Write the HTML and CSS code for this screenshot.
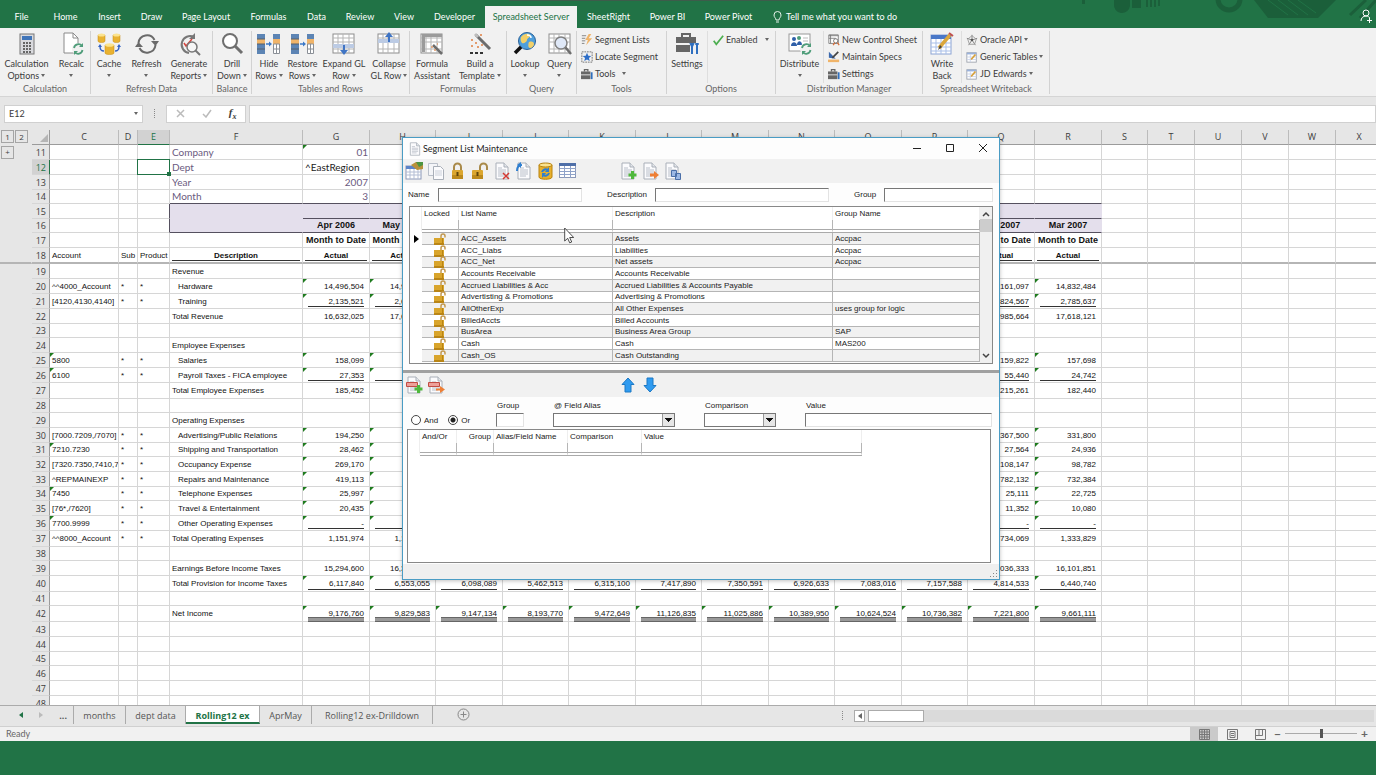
FILE: index.html
```
<!DOCTYPE html>
<html lang="en">
<head>
  <meta charset="UTF-8" />
  <meta name="viewport" content="width=device-width, initial-scale=1.0"/>
  <title>Rolling12 ex - Spreadsheet Server</title>
  <link rel="stylesheet" href="styles.css">
</head>
<body>
  <!-- shared icons -->
  <svg class="defs" aria-hidden="true">
    <symbol id="i-page" viewBox="0 0 18 18">
      <path d="M3 1h8l4 4v12H3z" fill="#fbfbfd" stroke="#a9afb8"/>
      <path d="M11 1v4h4" fill="#e3e6ea" stroke="#a9afb8"/>
      <path d="M5 6h4M5 8h8M5 10h8M5 12h8M5 14h6" stroke="#b9bfc9"/>
    </symbol>
    <symbol id="i-unlock" viewBox="0 0 12 12">
      <path d="M7 6V3a2 2 0 0 1 4 0v1.500" fill="none" stroke="#c39a52" stroke-width="1.500"/>
      <rect x="0" y="5" width="10" height="7" fill="#d9a52c"/>
      <path d="M0 10h10v2H0z" fill="#b98516"/>
      <path d="M8.500 5v7" stroke="#b98516"/>
    </symbol>
    <symbol id="i-case" viewBox="0 0 14 14">
      <path d="M4 4V2h4v2" fill="none" stroke="#666" stroke-width="1.500"/>
      <rect x="0" y="4" width="11" height="9" fill="#666"/>
      <path d="M0 8h11" stroke="#f1f1f1"/>
      <path d="M12.500 5v8" stroke="#2f6fbf" stroke-width="2"/>
    </symbol>
    <symbol id="i-sheetpen" viewBox="0 0 14 14">
      <rect x="1" y="2" width="11" height="11" fill="#fff" stroke="#9aa0aa"/>
      <path d="M1 2h11v2H1z" fill="#9ab2dc"/>
      <path d="M1 7h11M1 10h11M5 4v9" stroke="#c8d3ea"/>
      <path d="M11 4L6 10" stroke="#d8a038" stroke-width="2"/>
    </symbol>
    <symbol id="i-hide" viewBox="0 0 24 20">
      <path d="M0 0h8v20H0z" fill="#5c84b4"/>
      <path d="M0 5h8v5H0z" fill="#f0b469"/>
      <path d="M0 5h8M0 10h8M0 15h8" stroke="#54606e"/>
      <path d="M9 10h4" stroke="#3a78c8" stroke-width="1.500"/><path d="M12 7.500l3 2.500-3 2.500z" fill="#3a78c8"/>
      <path d="M16 0h7v5h-7z" fill="#5c84b4"/><path d="M16 5h7v5h-7z" fill="#f0b469"/>
      <path d="M16.500 10h6v9.500h-6zM16 15h7M19.500 10v10" fill="#fff" stroke="#8a8f96"/>
    </symbol>
    <symbol id="i-grid" viewBox="0 0 24 22">
      <rect x="1" y="1" width="21" height="19" fill="#fff" stroke="#8d8d8d"/>
      <path d="M1 5h21M1 9h21M1 16h21M6 1v19M11 1v19M17 1v19" stroke="#b5b5b5"/>
    </symbol>
  </svg>

  <header class="tabs-bar">
    <svg class="pattern" width="310" height="20" viewBox="0 0 310 20" aria-hidden="true">
      <g fill="#1b5f3a">
        <path d="M16 0h3v4h-3z"/>
        <path d="M48 0h16v6a8 8 0 0 1-16-2z"/>
        <path d="M66 0h9v8h-9z"/>
        <path d="M80 0h2v7h-2zM84 0h2v7h-2zM88 0h2v7h-2zM92 0h2v6h-2z"/>
        <path d="M188 0l14 18h50l18-18z"/>
      </g>
      <circle cx="163" cy="-1" r="11" fill="none" stroke="#1b5f3a" stroke-width="5"/>
      <path d="M202 0l20 15M212 0l20 15M222 0l20 15M232 0l18 13" stroke="#217346"/>
      <path d="M284 15l16-15M294 18l16-18" stroke="#1b5f3a" stroke-width="3"/>
    </svg>
    <nav class="tabs">
      <a href="#">File</a>
      <a href="#">Home</a>
      <a href="#">Insert</a>
      <a href="#">Draw</a>
      <a href="#">Page Layout</a>
      <a href="#">Formulas</a>
      <a href="#">Data</a>
      <a href="#">Review</a>
      <a href="#">View</a>
      <a href="#">Developer</a>
      <a href="#" class="active">Spreadsheet Server</a>
      <a href="#">SheetRight</a>
      <a href="#">Power BI</a>
      <a href="#">Power Pivot</a>
      <a href="#" class="tell">
        <svg width="9" height="13" viewBox="0 0 9 13"><path d="M3 9C3 7 1 6.500 1 4a3.500 3.500 0 0 1 7 0c0 2.500-2 3-2 5zM3 11h3" fill="none" stroke="#e6f2ea"/></svg>
        Tell me what you want to do
      </a>
    </nav>
    <button class="share" aria-label="Share">
      <svg width="13" height="14" viewBox="0 0 13 14"><circle cx="6" cy="4" r="3" fill="none" stroke="#fff"/><path d="M1 12c0-3 2-5 5-5 2 0 3 1 4 2M7 11.500h5M9.500 9v5" fill="none" stroke="#fff"/></svg>
    </button>
  </header>

  <section class="ribbon">
    <div class="group g-calc">
      <div class="tools">
        <button class="big">
          <svg viewBox="0 0 24 24"><rect x="5" y="2" width="14" height="20" fill="#d9dade" stroke="#777"/><path d="M7 4h10v4H7z" fill="#3f74b8"/><path d="M8 11h2M11 11h2M14 11h2M8 14h2M11 14h2M14 14h2M8 17h2M11 17h2M14 17h2M8 20h2M11 20h2M14 20h2" stroke="#666" stroke-width="2"/></svg>
          <span>Calculation<br>Options <i class="caret"></i></span>
        </button>
        <button class="big">
          <svg viewBox="0 0 24 24"><path d="M4 1h9l5 5v15H4z" fill="#fff" stroke="#8a8a8a"/><path d="M13 1v5h5" fill="none" stroke="#8a8a8a"/><circle cx="18" cy="17" r="6" fill="#f1f1f1"/><path d="M14 16a4.500 4.500 0 0 1 8-2M22.500 18a4.500 4.500 0 0 1-8 2" fill="none" stroke="#4f9d7a" stroke-width="1.800"/><path d="M23 11v4h-4zM14 23v-4h4z" fill="#4f9d7a"/></svg>
          <span>Recalc<br><i class="caret"></i></span>
        </button>
      </div>
      <div class="caption">Calculation</div>
    </div>

    <div class="group g-refresh">
      <div class="tools">
        <button class="big">
          <svg viewBox="0 0 24 24"><g fill="#e9b231" stroke="#c58a12" stroke-width=".5"><path d="M1 3v6c0 2 7 2 7 0V3z"/><path d="M16 3v6c0 2 7 2 7 0V3z"/><path d="M8 13v8c0 2 9 2 9 0v-8z"/></g><g fill="#fbe38e"><ellipse cx="4.500" cy="3" rx="3.500" ry="1.500"/><ellipse cx="19.500" cy="3" rx="3.500" ry="1.500"/><ellipse cx="12.500" cy="13" rx="4.500" ry="1.800"/></g><path d="M3 14c0 4 1 5 4 5M22 14c0 4-1 5-4 5" fill="none" stroke="#3564c4" stroke-width="1.500"/><path d="M1 15l2-3 2 3zM20 15l2-3 2 3z" fill="#3564c4"/></svg>
          <span>Cache<br><i class="caret"></i></span>
        </button>
        <button class="big">
          <svg viewBox="0 0 24 24"><path d="M3.500 11a8.500 8.500 0 0 1 16-3M20.500 13a8.500 8.500 0 0 1-16 3" fill="none" stroke="#6a6a6a" stroke-width="2"/><path d="M16 9h8l-3.500 5zM8 15H0l3.500-5z" fill="#6a6a6a"/></svg>
          <span>Refresh<br><i class="caret"></i></span>
        </button>
        <button class="big">
          <svg viewBox="0 0 24 24"><path d="M12 21A8.500 8.500 0 1 1 17 5" fill="none" stroke="#777" stroke-width="2"/><path d="M18 1v6h-6z" fill="#777"/><path d="M7 11l2 3 6-7" fill="none" stroke="#d8433b" stroke-width="1.500"/><circle cx="15" cy="15" r="5" fill="#f6f6f6" stroke="#777" stroke-width="1.500"/><path d="M18.500 18.500L23 23" stroke="#777" stroke-width="2"/></svg>
          <span>Generate<br>Reports <i class="caret"></i></span>
        </button>
      </div>
      <div class="caption">Refresh Data</div>
    </div>

    <div class="group g-balance">
      <div class="tools">
        <button class="big">
          <svg viewBox="0 0 24 24"><circle cx="10" cy="9" r="7" fill="#fff" stroke="#6f6f6f" stroke-width="2"/><path d="M15 14l7 7" stroke="#6f6f6f" stroke-width="3"/></svg>
          <span>Drill<br>Down <i class="caret"></i></span>
        </button>
      </div>
      <div class="caption">Balance</div>
    </div>

    <div class="group g-rows">
      <div class="tools">
        <button class="big"><svg viewBox="0 0 24 22"><use href="#i-hide" width="24" height="20" y="1"/></svg><span>Hide<br>Rows <i class="caret"></i></span></button>
        <button class="big"><svg viewBox="0 0 24 22"><use href="#i-hide" width="24" height="20" y="1"/></svg><span>Restore<br>Rows <i class="caret"></i></span></button>
        <button class="big">
          <svg viewBox="0 0 24 24"><use href="#i-grid" width="24" height="22" y="1"/><path d="M1 12h21v4H1z" fill="#bccbe4"/><path d="M12 13v6" stroke="#3f74c4" stroke-width="2"/><path d="M8 18h8l-4 5z" fill="#3f74c4"/></svg>
          <span>Expand GL<br>Row <i class="caret"></i></span>
        </button>
        <button class="big">
          <svg viewBox="0 0 24 24"><use href="#i-grid" width="24" height="22" y="1"/><path d="M1 7h21v4H1z" fill="#bccbe4"/><path d="M12 3v7" stroke="#3f74c4" stroke-width="2"/><path d="M8 5h8l-4-5z" fill="#3f74c4"/></svg>
          <span>Collapse<br>GL Row <i class="caret"></i></span>
        </button>
      </div>
      <div class="caption">Tables and Rows</div>
    </div>

    <div class="group g-formulas">
      <div class="tools">
        <button class="big">
          <svg viewBox="0 0 24 24"><use href="#i-grid" width="24" height="22" y="1"/><path d="M2 2h20v3H2zM2 2h3v18H2z" fill="#9b9b9b"/><path d="M13 13l9 9" stroke="#6d6d6d" stroke-width="2.500"/><path d="M11 15h2M14 18h2M17 12h1" stroke="#e09a6a" stroke-width="1.500"/></svg>
          <span>Formula<br>Assistant</span>
        </button>
        <button class="big">
          <svg viewBox="0 0 24 24"><path d="M8 3l14 14" stroke="#6d6d6d" stroke-width="3"/><path d="M7 2l3 3" stroke="#bdbdbd" stroke-width="3"/><path d="M3 8h2M7 11h2M3 14h2M9 15h2M13 13h2M12 3h2" stroke="#e39b6d" stroke-width="2"/><path d="M2 21h3M7 21h3M12 21h3" stroke="#333" stroke-width="2"/></svg>
          <span>Build a<br>Template <i class="caret"></i></span>
        </button>
      </div>
      <div class="caption">Formulas</div>
    </div>

    <div class="group g-query">
      <div class="tools">
        <button class="big">
          <svg viewBox="0 0 24 24"><circle cx="14" cy="9" r="8.500" fill="#4f9fdc" stroke="#2a6097"/><path d="M8 5c3-4 8-4 9-2s-3 3-3 5-4 4-5 3-2-4-1-6zM16 10c3-1 5 0 5 2s-2 4-4 4-2-4-1-6z" fill="#f2d069"/><path d="M14 3c2 0 4 1 4 3" stroke="#fff" stroke-width="1.500" fill="none"/><path d="M8 15l-6 6" stroke="#111" stroke-width="3.500"/></svg>
          <span>Lookup<br><i class="caret"></i></span>
        </button>
        <button class="big">
          <svg viewBox="0 0 24 24"><use href="#i-grid" width="24" height="22" y="1"/><circle cx="13" cy="11" r="6" fill="#dfe8f7" stroke="#808080" stroke-width="1.500"/><path d="M17.500 15.500L23 22" stroke="#6d6d6d" stroke-width="2.500"/></svg>
          <span>Query<br><i class="caret"></i></span>
        </button>
      </div>
      <div class="caption">Query</div>
    </div>

    <div class="group g-tools">
      <div class="tools">
        <div class="stack">
          <button class="small">
            <svg viewBox="0 0 14 14"><path d="M1 2h5M1 5h4M1 8h4M1 11h3" stroke="#777"/><path d="M9 0L5 7h3l-2 6 7-8H9l3-5z" fill="#f0b469"/></svg>
            Segment Lists
          </button>
          <button class="small">
            <svg viewBox="0 0 14 14"><rect x="1" y="1" width="12" height="12" fill="none" stroke="#666" stroke-dasharray="2 1"/><path d="M7 2l1.500 3.500 3.500.3-2.700 2.400.9 3.600L7 10l-3.200 1.800.9-3.600L2 5.800l3.500-.3z" fill="#2f6fc8"/></svg>
            Locate Segment
          </button>
          <button class="small"><svg viewBox="0 0 14 14"><use href="#i-case"/></svg>Tools <i class="caret far"></i></button>
        </div>
      </div>
      <div class="caption">Tools</div>
    </div>

    <div class="group g-options">
      <div class="tools">
        <button class="big">
          <svg viewBox="0 0 24 24"><path d="M7 5V2h8v3" fill="none" stroke="#666" stroke-width="2"/><path d="M1 5h20v6H1zM1 13h14v7H1z" fill="#666"/><path d="M17 11v11M22 11v11" stroke="#2f6fbf" stroke-width="2"/><path d="M15 11l2 4 2-4M20 12h4" stroke="#2f6fbf" stroke-width="1.500" fill="none"/></svg>
          <span>Settings</span>
        </button>
        <div class="stack">
          <button class="small">
            <svg viewBox="0 0 14 14"><path d="M2 8l3 4 8-10" fill="none" stroke="#4cae4f" stroke-width="2"/></svg>
            Enabled <i class="caret far"></i>
          </button>
        </div>
      </div>
      <div class="caption">Options</div>
    </div>

    <div class="group g-dist">
      <div class="tools">
        <button class="big">
          <svg viewBox="0 0 24 24"><rect x="1" y="2" width="21" height="17" fill="#fff" stroke="#9a9a9a"/><circle cx="6" cy="7" r="2" fill="#2f5fa8"/><circle cx="11" cy="6" r="2" fill="#4f9d7a"/><path d="M3 14c0-5 6-5 6 0zM9 13c0-5 5-5 5 0z" fill="#2f5fa8"/><path d="M15 6h5M15 9h5" stroke="#bbb"/><circle cx="18" cy="17" r="6" fill="#f1f1f1"/><path d="M14 16a4.500 4.500 0 0 1 8-2M22.500 18a4.500 4.500 0 0 1-8 2" fill="none" stroke="#4f9d7a" stroke-width="1.800"/><path d="M23 11v4h-4zM14 23v-4h4z" fill="#4f9d7a"/></svg>
          <span>Distribute<br><i class="caret"></i></span>
        </button>
        <div class="stack">
          <button class="small">
            <svg viewBox="0 0 14 14"><path d="M1 1h11v10H1z" fill="#fff" stroke="#777"/><path d="M1 2h11M3 1v10M1 5h8" stroke="#777"/><circle cx="9" cy="8" r="2.500" fill="#fff" stroke="#666"/><path d="M6 13l2-3M11 10l2 3" stroke="#d8703b" stroke-width="1.500"/></svg>
            New Control Sheet
          </button>
          <button class="small">
            <svg viewBox="0 0 14 14"><path d="M1 1v7l8 1z" fill="#3c69ad"/><path d="M12 1L5 8" stroke="#444" stroke-width="2"/><path d="M0 10h13v3H0z" fill="#f0b469"/></svg>
            Maintain Specs
          </button>
          <button class="small"><svg viewBox="0 0 14 14"><use href="#i-case"/></svg>Settings</button>
        </div>
      </div>
      <div class="caption">Distribution Manager</div>
    </div>

    <div class="group g-write">
      <div class="tools">
        <button class="big">
          <svg viewBox="0 0 24 24"><rect x="1" y="3" width="20" height="19" fill="#fff" stroke="#8ca4d4"/><path d="M1 3h20v4H1z" fill="#4a78c8"/><path d="M1 11h20M1 15h20M1 19h20M6 7v15M11 7v15M16 7v15" stroke="#a9bfe8"/><path d="M20 3L9 16" stroke="#dba73c" stroke-width="3.500"/><path d="M19 1l4 3" stroke="#c0504d" stroke-width="2"/><path d="M10 13l-2 5 4-3z" fill="#444"/></svg>
          <span>Write<br>Back</span>
        </button>
        <div class="stack">
          <button class="small">
            <svg viewBox="0 0 14 14"><path d="M7 1v6M1 5l6 2 6-2M3 13l4-6 4 6" stroke="#777" fill="none"/><path d="M7 2l5 4-2 6H4L2 6z" fill="none" stroke="#999"/><circle cx="7" cy="7" r="1.500" fill="#555"/></svg>
            Oracle API <i class="caret"></i>
          </button>
          <button class="small"><svg viewBox="0 0 14 14"><use href="#i-sheetpen"/></svg>Generic Tables <i class="caret"></i></button>
          <button class="small"><svg viewBox="0 0 14 14"><use href="#i-sheetpen"/></svg>JD Edwards <i class="caret"></i></button>
        </div>
      </div>
      <div class="caption">Spreadsheet Writeback</div>
    </div>
  </section>

  <section class="formula-bar">
    <div class="name-box">
      <input type="text" value="E12" aria-label="Name box">
      <i class="caret"></i>
    </div>
    <span class="dots"></span>
    <div class="fx">
      <svg width="9" height="9" viewBox="0 0 9 9"><path d="M1 1l7 7M8 1L1 8" stroke="#bbb" stroke-width="1.500"/></svg>
      <svg width="10" height="9" viewBox="0 0 10 9"><path d="M1 5l3 3 5-7" fill="none" stroke="#bbb" stroke-width="1.500"/></svg>
      <em>f<sub>x</sub></em>
    </div>
    <input class="formula" type="text" aria-label="Formula">
  </section>

  <main class="sheet">
    <table id="grid"></table>
  </main>

  <nav class="sheet-tabs">
    <div class="nav-arrows">
      <svg width="4" height="8" viewBox="0 0 4 8"><path d="M4 1v6L0 4z" fill="#217346"/></svg>
      <svg width="4" height="8" viewBox="0 0 4 8"><path d="M0 1v6l4-3z" fill="#bbb"/></svg>
      <b>...</b>
    </div>
    <a href="#">months</a>
    <a href="#">dept data</a>
    <a href="#" class="active">Rolling12 ex</a>
    <a href="#">AprMay</a>
    <a href="#">Rolling12 ex-Drilldown</a>
    <button class="add" aria-label="New sheet">
      <svg width="13" height="13" viewBox="0 0 13 13"><circle cx="6.500" cy="6.500" r="5.500" fill="none" stroke="#888"/><path d="M3.500 6.500h6M6.500 3.500v6" stroke="#888"/></svg>
    </button>
    <div class="hscroll">
      <span class="dots"></span>
      <button aria-label="Scroll left"><svg width="4" height="6" viewBox="0 0 4 6"><path d="M4 0v6L0 3z" fill="#666"/></svg></button>
      <div class="track"><div class="thumb"></div></div>
    </div>
  </nav>

  <section class="status">
    <span>Ready</span>
    <div class="views">
      <button class="on" aria-label="Normal"><svg width="11" height="11" viewBox="0 0 11 11"><path d="M.5.500h10v10H.5zM.5 3h10M.5 5.500h10M.5 8h10M3 .5v10M5.500.5v10M8 .5v10" fill="none" stroke="#777"/></svg></button>
      <button aria-label="Page layout"><svg width="11" height="11" viewBox="0 0 11 11"><path d="M.5.500h10v10H.5zM3 2.500h5v6H3zM4 4.500h3M4 6.500h3" fill="none" stroke="#777"/></svg></button>
      <button aria-label="Page break"><svg width="11" height="11" viewBox="0 0 11 11"><path d="M.5.500h10v10H.5zM.5 6.500h7v-6M4 .5v6" fill="none" stroke="#777"/></svg></button>
    </div>
    <div class="zoom">
      <b>−</b>
      <input type="range" min="0" max="100" value="50" aria-label="Zoom">
      <b>+</b>
    </div>
  </section>
  <footer></footer>

  <div class="dialog" role="dialog" aria-label="Segment List Maintenance">
    <div class="titlebar">
      <svg width="14" height="14"><use href="#i-page"/></svg>
      <span>Segment List Maintenance</span>
      <button aria-label="Minimize"><svg width="10" height="10" viewBox="0 0 10 10"><path d="M1 5.500h8" stroke="#222"/></svg></button>
      <button aria-label="Maximize"><svg width="10" height="10" viewBox="0 0 10 10"><path d="M1.500 1.500h7v7h-7z" fill="none" stroke="#222"/></svg></button>
      <button aria-label="Close"><svg width="10" height="10" viewBox="0 0 10 10"><path d="M1 1l8 8M9 1L1 9" stroke="#222"/></svg></button>
    </div>

    <div class="toolbar">
      <button aria-label="New list"><svg viewBox="0 0 18 18"><rect x="1" y="4" width="15" height="13" fill="#fff" stroke="#8b98b8"/><path d="M1 4h15v3H1z" fill="#5b83c8"/><path d="M1 10h15M1 13h15M5 7v10M9 7v10M13 7v10" stroke="#b3bdd4"/><path d="M6 3l5-3h7v7l-6 1z" fill="#b8903a"/><path d="M11 0h7v3l-4 2z" fill="#4c9440"/></svg></button>
      <button aria-label="Copy"><svg viewBox="0 0 18 18"><path d="M1.500 1.500h9v12h-9z" fill="#f4f5f8" stroke="#b9bfc9"/><path d="M6.500 4.500h7l3 3v10h-10z" fill="#fbfbfd" stroke="#a9afb8"/><path d="M8 9h7M8 11h7M8 13h7" stroke="#ccd1da"/></svg></button>
      <button aria-label="Lock"><svg viewBox="0 0 18 18"><path d="M5 8V5a3.500 3.500 0 0 1 7 0v3" fill="none" stroke="#a98a4a" stroke-width="2"/><rect x="3" y="8" width="11" height="9" rx="1" fill="#dba62e"/><path d="M3 13h11v4H3z" fill="#bd8a1b"/><path d="M8.500 10v4" stroke="#5f4509" stroke-width="2"/></svg></button>
      <button aria-label="Unlock"><svg viewBox="0 0 18 18"><path d="M9 8V5a3.500 3.500 0 0 1 7 0v3" fill="none" stroke="#a98a4a" stroke-width="2"/><rect x="1" y="8" width="11" height="9" rx="1" fill="#dba62e"/><path d="M1 13h11v4H1z" fill="#bd8a1b"/><path d="M6.500 10v4" stroke="#5f4509" stroke-width="2"/></svg></button>
      <button aria-label="Delete"><svg viewBox="0 0 18 18"><use href="#i-page"/><path d="M10 11l6 6M16 11l-6 6" stroke="#d23a34" stroke-width="1.500"/></svg></button>
      <button aria-label="Revert"><svg viewBox="0 0 18 18"><use href="#i-page"/><path d="M2 9c0-4 2-6 5-6" fill="none" stroke="#2f7fd0" stroke-width="2"/><path d="M6 0v6l-4-3z" fill="#2f7fd0"/></svg></button>
      <button aria-label="Refresh"><svg viewBox="0 0 18 18"><path d="M2 3v12c0 3 13 3 13 0V3z" fill="#e8b02c" stroke="#b9830f"/><ellipse cx="8.500" cy="3" rx="6.500" ry="2" fill="#fbe38e" stroke="#b9830f"/><path d="M5 10a4 4 0 0 1 6-2M12 11a4 4 0 0 1-6 2" fill="none" stroke="#2f7fd0" stroke-width="2"/><path d="M12 5v5H8zM5 16v-5h4z" fill="#2f7fd0"/></svg></button>
      <button aria-label="Grid"><svg viewBox="0 0 18 18"><rect x=".5" y="1.500" width="16" height="14" fill="#fff" stroke="#8b98b8"/><path d="M0 1h17v3H0z" fill="#4f6fa8"/><path d="M1 6.500h16M1 9.500h16M1 12.500h16M5.500 4v12M11.500 4v12" stroke="#8fa2c8"/></svg></button>
      <button class="gap" aria-label="Add row"><svg viewBox="0 0 18 18"><use href="#i-page"/><path d="M13.500 9v8M9.500 13h8" stroke="#4fb83c" stroke-width="3"/></svg></button>
      <button aria-label="Move row"><svg viewBox="0 0 18 18"><use href="#i-page"/><path d="M9 11.500h4V9l5 4-5 4v-2.500H9z" fill="#ee7f35"/></svg></button>
      <button aria-label="Duplicate row"><svg viewBox="0 0 18 18"><use href="#i-page"/><path d="M8.500 8.500h5v6h-5zM12.500 11.500h5v6h-5z" fill="#9cb8e4" stroke="#4a6fa8"/></svg></button>
    </div>

    <form class="filters">
      <div class="field f-name"><label for="fName">Name</label><input type="text" id="fName" autofocus></div>
      <div class="field f-desc"><label for="fDesc">Description</label><input type="text" id="fDesc"></div>
      <div class="field f-group"><label for="fGroup">Group</label><input type="text" id="fGroup"></div>
    </form>

    <div class="listbox lists">
      <table>
        <colgroup><col class="c-mark"><col class="c-lock"><col class="c-list"><col class="c-desc"><col></colgroup>
        <thead>
          <tr><th></th><th>Locked</th><th>List Name</th><th>Description</th><th>Group Name</th></tr>
          <tr class="filter"><td></td><td></td><td></td><td></td><td></td></tr>
        </thead>
        <tbody id="lists"></tbody>
      </table>
      <div class="vscroll">
        <svg width="8" height="6" viewBox="0 0 8 6"><path d="M1 5l3-3 3 3" fill="none" stroke="#444" stroke-width="1.500"/></svg>
        <div class="thumb"></div>
        <svg width="8" height="6" viewBox="0 0 8 6"><path d="M1 1l3 3 3-3" fill="none" stroke="#444" stroke-width="1.500"/></svg>
      </div>
    </div>

    <div class="splitter"></div>

    <div class="toolbar">
      <button aria-label="Add condition"><svg viewBox="0 0 18 18"><use href="#i-page"/><path d="M1.500 6.500h11v4h-11z" fill="#eda09a" stroke="#c24a43"/><path d="M13.500 9v8M9.500 13h8" stroke="#4fb83c" stroke-width="3"/></svg></button>
      <button aria-label="Remove condition"><svg viewBox="0 0 18 18"><use href="#i-page"/><path d="M1.500 6.500h11v4h-11z" fill="#eda09a" stroke="#c24a43"/><path d="M9 12.500h4V10l5 3.500-5 3.500v-2.500H9z" fill="#ee7f35"/></svg></button>
      <button class="gap-wide" aria-label="Move up"><svg viewBox="0 0 18 18"><path d="M9 2l6 6.500h-3V16H6V8.500H3z" fill="#2f9bf0" stroke="#1d78c4"/></svg></button>
      <button aria-label="Move down"><svg viewBox="0 0 18 18"><path d="M9 16l6-6.500h-3V2H6v7.500H3z" fill="#2f9bf0" stroke="#1d78c4"/></svg></button>
    </div>

    <form class="criteria">
      <div class="radios">
        <label><input type="radio" name="op">And</label>
        <label><input type="radio" name="op" checked>Or</label>
      </div>
      <div class="cell"><label for="cGroup">Group</label><input type="text" id="cGroup"></div>
      <div class="cell"><label for="cAlias">@ Field Alias</label><select id="cAlias"><option></option></select></div>
      <div class="cell"><label for="cComp">Comparison</label><select id="cComp"><option></option></select></div>
      <div class="cell"><label for="cValue">Value</label><input type="text" id="cValue"></div>
    </form>

    <div class="listbox conditions">
      <table>
        <colgroup><col class="c-mark"><col class="c-lock"><col class="c-lock"><col class="c-alias"><col class="c-alias"><col class="c-desc"></colgroup>
        <thead>
          <tr><th></th><th>And/Or</th><th class="right">Group</th><th>Alias/Field Name</th><th>Comparison</th><th>Value</th></tr>
          <tr class="filter"><td></td><td></td><td></td><td></td><td></td><td></td></tr>
        </thead>
      </table>
    </div>
    <div class="grip">
      <svg width="9" height="9" viewBox="0 0 9 9"><path d="M7 1h1v1H7zM4 4h1v1H4zM7 4h1v1H7zM1 7h1v1H1zM4 7h1v1H4zM7 7h1v1H7z" fill="#888"/></svg>
    </div>

    <svg class="cursor" width="10" height="17" viewBox="0 0 10 17"><path d="M.7 1v13l3-2.700 2 4.500 2-.8-2-4.500h4z" fill="#fff" stroke="#222" stroke-width=".8"/></svg>
  </div>

  <script src="script.js"></script>
</body>
</html>
```
FILE: styles.css
```
:root {
  --green: #217346;
  --ribbon: #f1f1f1;
  --chrome: #e6e6e6;
  --line: #d6d6d6;
  --text: #3c3c3c;
  --ui: Lato, "Open Sans", sans-serif;
  --cell: "Liberation Sans", Arial, sans-serif;
}

* {
  box-sizing: border-box;
}

body {
  margin: 0;
  height: 100vh;
  display: flex;
  flex-direction: column;
  position: relative;
  overflow: hidden;
  font-family: var(--ui);
  font-size: 9px;
  color: var(--text);
  background: var(--green);
}

button, input, select {
  font: inherit;
  color: inherit;
  margin: 0;
  padding: 0;
  border: none;
  border-radius: 0;
  background: none;
}

input:focus {
  outline: none;
}

a {
  color: inherit;
  text-decoration: none;
}

.defs {
  position: absolute;
  width: 0;
  height: 0;
}

.caret {
  display: inline-block;
  border: 2px solid transparent;
  border-top: 3px solid #666;
  border-bottom: none;
  vertical-align: 2px;
}

.caret.far {
  margin-left: 5px;
}

.dots {
  width: 1px;
  height: 9px;
  border-left: 1px dotted #888;
}

/* ribbon tabs */
.tabs-bar {
  height: 28px;
  display: flex;
  justify-content: space-between;
  align-items: flex-end;
  position: relative;
  color: #fff;
  flex: none;
}

.tabs-bar::before {
  content: "";
  position: absolute;
  top: 0;
  left: 37%;
  width: 28%;
  height: 1px;
  background: #3d5c4b;
}

.pattern {
  position: absolute;
  top: 0;
  right: 0;
}

.tabs {
  display: grid;
  grid-template-columns: 43px 45px 43px 41px 68px 57px 39px 48px 40px 61px 92px 63px 55px 67px auto;
  text-align: center;
  line-height: 22px;
}

.tabs .active {
  background: var(--ribbon);
  color: var(--green);
}

.tell {
  display: flex;
  align-items: center;
  gap: 4px;
  padding-left: 11px;
}

.share {
  position: relative;
  width: 20px;
  height: 22px;
}

/* ribbon */
.ribbon {
  flex: none;
  display: flex;
  height: 69px;
  padding: 3px 0 2px;
  background: var(--ribbon);
  border-bottom: 1px solid #d5d5d5;
}

.group {
  display: flex;
  flex-direction: column;
  border-right: 1px solid #d2d2d2;
}

.g-calc { width: 91px; }
.g-refresh { width: 122px; }
.g-balance { width: 39px; }
.g-rows { width: 158px; }
.g-formulas { width: 97px; }
.g-query { width: 70px; }
.g-tools { width: 90px; }
.g-options { width: 109px; }
.g-dist { width: 147px; }
.g-write { width: 127px; }

.tools {
  display: grid;
  flex: none;
  height: 52px;
}

.g-calc .tools { grid-template-columns: 53px 1fr; }
.g-refresh .tools { grid-template-columns: 36px 39px 1fr; }
.g-rows .tools { grid-template-columns: 34px 33px 50px 1fr; }
.g-formulas .tools { grid-template-columns: 44px 1fr; }
.g-query .tools { grid-template-columns: 36px 1fr; }
.g-options .tools { grid-template-columns: 40px 1fr; }
.g-dist .tools { grid-template-columns: 47px 1fr; }
.g-write .tools { grid-template-columns: 38px 1fr; }

.big {
  display: flex;
  flex-direction: column;
  align-items: center;
  padding-top: 1px;
  line-height: 12px;
  white-space: nowrap;
}

.big svg {
  width: 24px;
  height: 24px;
  margin-bottom: 2px;
  flex: none;
}

.big span {
  display: block;
}

.big + .stack {
  border-left: 1px solid #dedede;
}

.stack {
  display: flex;
  flex-direction: column;
  justify-content: flex-start;
  padding-left: 4px;
}

.small {
  display: flex;
  align-items: center;
  gap: 2px;
  height: 17px;
  white-space: nowrap;
}

.small svg {
  width: 12px;
  height: 12px;
}

.caption {
  text-align: center;
  line-height: 12px;
  color: #666;
  white-space: nowrap;
}

/* formula bar */
.formula-bar {
  flex: none;
  display: flex;
  align-items: center;
  height: 33px;
  padding: 0 0 0 4px;
  background: var(--chrome);
}

.name-box,
.fx,
.formula {
  height: 18px;
  background: #fff;
  border: 1px solid #d0d0d0;
}

.name-box {
  width: 139px;
  display: flex;
  align-items: center;
  padding: 0 4px;
}

.name-box input {
  flex: 1;
  min-width: 0;
}

.formula-bar .dots {
  margin: 0 11px;
}

.fx {
  width: 80px;
  display: flex;
  align-items: center;
  justify-content: space-around;
  margin-right: 3px;
}

.fx em {
  font: italic bold 11px "Liberation Serif", serif;
}

.fx sub {
  font-size: 8px;
}

.formula {
  flex: 1;
}

/* worksheet */
.sheet {
  flex: 1;
  min-height: 0;
  overflow: hidden;
  background: #fff;
}

#grid {
  table-layout: fixed;
  width: 1382px;
  border-spacing: 0;
  font-family: var(--cell);
  font-size: 8px;
  color: #111;
}

#grid td,
#grid th {
  position: relative;
  padding: 0;
  line-height: 11px;
  border-right: 1px solid var(--line);
  border-bottom: 1px solid var(--line);
  white-space: nowrap;
}

#grid td {
  padding: 0 2px;
  overflow: hidden;
}

#grid th {
  font-family: "Open Sans", sans-serif;
  font-size: 9px;
  font-weight: normal;
  color: var(--text);
  background: var(--chrome);
}

#grid thead th {
  height: 15px;
  vertical-align: top;
  line-height: 13px;
  border-right-color: #bbb;
  border-bottom-color: #9b9b9b;
}

#grid tbody th {
  border-right-color: #9b9b9b;
  text-align: right;
  padding-right: 3px;
}

#grid th.gutter {
  border-color: var(--chrome);
  text-align: left;
  padding: 0 0 0 1px;
}

.gutter button {
  width: 13px;
  height: 13px;
  margin-right: 1px;
  border: 1px solid #a5a5a5;
  font-size: 8px;
  line-height: 10px;
  vertical-align: top;
}

#grid .corner {
  border-right-color: #9b9b9b;
}

.corner svg {
  display: block;
  margin: 3px 0 0 8px;
}

#grid .hot {
  background: #d2d2d2;
  color: var(--green);
}

#grid thead .hot {
  border-bottom-color: var(--green);
}

#grid tbody .hot {
  border-right-color: var(--green);
}

#grid .indent { padding-left: 8px; }
#grid .num { text-align: right; padding-right: 5px; }
#grid .param { font: 10px/11px var(--ui); color: #6a5a7e; }
#grid .dark { color: #222; }
#grid .param.num { padding-right: 1px; }
#grid .bold { font-weight: bold; text-align: center; padding: 0; }
#grid .row16 .bold,
#grid .row17 .bold { font-size: 9px; }
#grid .band { background: #e4dfec; border-right-color: #e4dfec; }
#grid .row15 .band { border-bottom-color: #e4dfec; }
#grid .row15 .band.val,
#grid .row16 .band { border-bottom-color: #55505f; }
#grid .row14 .over { border-bottom-color: #55505f; }
#grid .edge { border-right-color: #55505f; }

#grid .row18 > * {
  border-bottom: 2px solid #b5b5b5;
}

#grid .row18 > .gutter {
  border-bottom-color: #b5b5b5;
}

#grid .flag::before {
  content: "";
  position: absolute;
  top: 0;
  left: 0;
  border-top: 4px solid #1e7b1e;
  border-right: 4px solid transparent;
}

#grid .under::after,
#grid .double::after {
  content: "";
  position: absolute;
  left: 5px;
  right: 5px;
  bottom: 1px;
  border-bottom: 1px solid #333;
}

#grid .row18 .under::after {
  left: 2px;
  right: 2px;
}

#grid .double {
  overflow: visible;
}

#grid .double::after {
  bottom: -1px;
  height: 3px;
  border-top: 1px solid #666;
  border-bottom: 1px solid #666;
  background: #999;
}

#grid .sel {
  overflow: visible;
}

#grid .sel::before {
  content: "";
  position: absolute;
  right: -2px;
  bottom: -2px;
  width: 4px;
  height: 4px;
  background: var(--green);
  z-index: 2;
}

#grid .sel::after {
  content: "";
  position: absolute;
  inset: -1px;
  border: 1px solid var(--green);
  z-index: 1;
}

/* sheet tabs */
.sheet-tabs {
  flex: none;
  display: grid;
  grid-template-columns: 74px 52px 60px 74px 52px 121px 60px 1fr;
  height: 21px;
  background: var(--chrome);
  border-top: 1px solid #ababab;
  font-family: "Open Sans", sans-serif;
  color: #555;
}

.sheet-tabs > a {
  line-height: 19px;
  height: 18px;
  text-align: center;
  white-space: nowrap;
  border-right: 1px solid #ababab;
}

.sheet-tabs .active {
  background: #fff;
  color: var(--green);
  font-weight: bold;
  border-bottom: 2px solid var(--green);
}

.nav-arrows {
  display: flex;
  align-items: center;
  justify-content: space-between;
  height: 18px;
  padding: 0 6px 0 19px;
  border-right: 1px solid #ababab;
}

.hscroll {
  display: flex;
  align-items: center;
  justify-content: flex-end;
  height: 19px;
  padding-right: 2px;
}

.hscroll button {
  display: flex;
  align-items: center;
  justify-content: center;
  width: 11px;
  height: 12px;
  margin: 0 3px 0 11px;
  background: #fff;
  border: 1px solid #ababab;
}

.hscroll .track {
  width: 506px;
  height: 12px;
  background: #dadada;
}

.hscroll .thumb {
  width: 56px;
  height: 12px;
  background: #fff;
  border: 1px solid #ababab;
}

/* status bar */
.status {
  flex: none;
  display: flex;
  align-items: flex-start;
  height: 15px;
  padding: 0 8px 0 6px;
  background: var(--ribbon);
  border-top: 1px solid #d0d0d0;
  line-height: 13px;
  color: #666;
}

.views {
  display: flex;
  margin-left: auto;
}

.views button {
  display: flex;
  align-items: center;
  justify-content: center;
  width: 28px;
  height: 14px;
}

.views .on {
  background: #cacaca;
}

.zoom {
  display: flex;
  align-items: center;
  gap: 4px;
  font-size: 12px;
  line-height: 13px;
}

.zoom input {
  appearance: none;
  width: 72px;
  height: 9px;
  background: linear-gradient(#aaa, #aaa) center / 100% 1px no-repeat;
}

.zoom input::-webkit-slider-thumb {
  appearance: none;
  width: 3px;
  height: 9px;
  background: #555;
}

footer {
  flex: none;
  height: 34px;
}

/* segment list window */
.dialog {
  position: absolute;
  left: 402px;
  top: 137px;
  width: 598px;
  display: flex;
  flex-direction: column;
  background: #fdfdfd;
  border: 1px solid #4a9cc4;
  box-shadow: 0 1px 4px rgba(0, 0, 0, 0.25);
  font-family: var(--cell);
  font-size: 8px;
  color: #222;
}

.titlebar {
  display: flex;
  align-items: center;
  height: 21px;
  padding-left: 5px;
  font-family: var(--ui);
  font-size: 9px;
  color: #222;
}

.titlebar span {
  flex: 1;
  padding-left: 1px;
}

.titlebar > svg {
  flex: none;
}

.titlebar button {
  width: 33px;
  height: 20px;
}

.toolbar {
  display: flex;
  align-items: center;
  height: 24px;
  background: #f1f1f1;
}

.toolbar button {
  width: 22px;
  height: 20px;
}

.toolbar svg {
  display: block;
  width: 18px;
  height: 18px;
  margin: auto;
}

.toolbar .gap { margin-left: 38px; }
.toolbar .gap-wide { margin-left: 170px; }

.filters {
  display: flex;
  gap: 25px;
  height: 23px;
  padding: 4px 6px 4px 5px;
}

.field {
  display: flex;
  align-items: center;
  flex: none;
}

.field label { width: 30px; }
.field.f-desc label { width: 48px; }
.f-name { width: 174px; }
.f-desc { width: 222px; }

.field.f-group {
  flex: 1;
  min-width: 0;
}

.dialog input[type="text"],
.dialog select {
  height: 14px;
  background: #fff;
  border: 1px solid #e3e3e3;
  border-top-color: #777;
  border-left-color: #777;
}

.field input {
  flex: 1;
  min-width: 0;
}

.listbox {
  display: flex;
  align-items: flex-start;
  background: #fff;
  border: 1px solid #888;
  overflow: hidden;
}

.lists {
  height: 158px;
  margin: 0 6px 6px;
}

.listbox table {
  table-layout: fixed;
  border-spacing: 0;
  width: 100%;
}

.conditions {
  height: 134px;
  margin: 0 8px 0 4px;
}

.conditions table {
  width: 454px;
}

.c-mark { width: 12px; }
.c-lock { width: 37px; }
.c-list { width: 154px; }
.c-desc { width: 220px; }
.c-alias { width: 74px; }

.listbox th,
.listbox td {
  padding: 0 2px;
  font-weight: normal;
  text-align: left;
  line-height: 10px;
  white-space: nowrap;
}

.listbox th {
  height: 13px;
  border-right: 1px solid #eee;
}

.listbox th.right {
  text-align: right;
}

.filter td {
  height: 13px;
  border-right: 1px solid #b5b5b5;
  border-bottom: 4px double #aaa;
}

.listbox tr > :first-child {
  padding: 0;
  border-right-color: #eee;
}

.filter td:first-child {
  border-bottom-color: transparent;
}

.listbox tbody tr {
  height: 12px;
}

.listbox tbody tr:nth-child(3n) {
  height: 11px;
}

.listbox tbody tr:nth-child(odd) td:not(:first-child) {
  background: #f1f1f1;
}

.listbox tbody td:not(:first-child) {
  border-right: 1px solid #b5b5b5;
  border-bottom: 1px solid #b5b5b5;
}

.listbox td svg {
  display: block;
  margin: -1px auto;
}

.vscroll {
  flex: none;
  align-self: stretch;
  width: 12px;
  display: flex;
  flex-direction: column;
  align-items: center;
  padding: 4px 0;
  background: #f0f0f0;
}

.vscroll .thumb {
  width: 12px;
  height: 13px;
  margin: 2px 0 auto;
  background: #cdcdcd;
}

.splitter {
  height: 3px;
  background: #a0a0a0;
}

.criteria {
  display: grid;
  grid-template-columns: 56px 28px 122px 72px 1fr;
  column-gap: 29px;
  align-items: end;
  height: 32px;
  padding: 0 7px 2px 8px;
}

.radios {
  display: flex;
  gap: 10px;
  height: 14px;
  white-space: nowrap;
}

.radios label {
  display: flex;
  align-items: center;
  gap: 3px;
}

.radios input {
  appearance: none;
  width: 10px;
  height: 10px;
  border: 1px solid #444;
  border-radius: 50%;
  background: #fff;
}

.radios input:checked {
  background: radial-gradient(circle, #222 2px, #fff 3px);
}

.cell label {
  display: block;
  padding-left: 1px;
  line-height: 10px;
  margin-bottom: 2px;
  white-space: nowrap;
}

.cell input,
.cell select {
  display: block;
  width: 100%;
}

.dialog select {
  appearance: none;
  border-right-color: #777;
  border-bottom-color: #777;
  background:
    conic-gradient(from -45deg at 50% 100%, #111 90deg, transparent 0) right 2px center / 7px 4px no-repeat,
    linear-gradient(90deg, #999 1px, #e6e6e6 1px) right / 12px 100% no-repeat,
    #fff;
}

.grip {
  display: flex;
  justify-content: flex-end;
  align-items: flex-end;
  height: 16px;
  padding: 0 1px 1px 0;
  background: #efefef;
  border-top: 1px solid #fdfdfd;
}

.cursor {
  position: absolute;
  left: 161px;
  top: 89px;
}
```
FILE: script.js
```
const cols = 'CDEFGHIJKLMNOPQRSTUVWX'.split('');
const colWidths = [32, 18, 69, 19, 32, 133, 67, 66, 67, 66, 67, 66, 67, 66, 67, 66, 67, 67, 46, 47, 47, 47, 47, 47];
const valueCols = 'GHIJKLMNOPQR'.split('');

// row number -> height, anything not listed is 15px
const heights = { 14: 14, 16: 14, 18: 16, 23: 14, 27: 16, 28: 14, 31: 14, 34: 14, 37: 16, 38: 14, 40: 16, 41: 14, 42: 16, 45: 14 };

const params = { 11: ['Company', '01'], 12: ['Dept', '^EastRegion'], 13: ['Year', '2007'], 14: ['Month', '3'] };

const months = { G: 'Apr 2006', H: 'May 2006', Q: 'Feb 2007', R: 'Mar 2007' };

const rows = {
  19: { F: 'Revenue' },
  20: { C: '^^4000_Account', F: ' Hardware', G: '14,496,504', H: '14,990,812', Q: '10,161,097', R: '14,832,484', flags: true },
  21: { C: '[4120,4130,4140]', F: ' Training', G: '2,135,521', H: '2,610,204', Q: '2,824,567', R: '2,785,637', flags: true, line: 'under' },
  22: { F: 'Total Revenue', G: '16,632,025', H: '17,601,016', Q: '12,985,664', R: '17,618,121' },
  24: { F: 'Employee Expenses' },
  25: { C: '5800', F: ' Salaries', G: '158,099', Q: '159,822', R: '157,698', flags: true, cflag: true },
  26: { C: '6100', F: ' Payroll Taxes - FICA employee', G: '27,353', Q: '55,440', R: '24,742', flags: true, cflag: true, line: 'under' },
  27: { F: 'Total Employee Expenses', G: '185,452', Q: '215,261', R: '182,440' },
  29: { F: 'Operating Expenses' },
  30: { C: '[7000.7209,/7070]', F: ' Advertising/Public Relations', G: '194,250', Q: '367,500', R: '331,800', flags: true },
  31: { C: '7210.7230', F: ' Shipping and Transportation', G: '28,462', Q: '27,564', R: '24,936', flags: true, cflag: true },
  32: { C: '[7320.7350,7410,7', F: ' Occupancy Expense', G: '269,170', Q: '108,147', R: '98,782', flags: true },
  33: { C: '^REPMAINEXP', F: ' Repairs and Maintenance', G: '419,113', Q: '782,132', R: '732,384', flags: true },
  34: { C: '7450', F: ' Telephone Expenses', G: '25,997', Q: '25,111', R: '22,725', flags: true, cflag: true },
  35: { C: '[76*,/7620]', F: ' Travel & Entertainment', G: '20,435', Q: '11,352', R: '10,080', flags: true },
  36: { C: '7700.9999', F: ' Other Operating Expenses', G: '-', Q: '-', R: '-', flags: true, cflag: true, line: 'under' },
  37: { C: '^^8000_Account', F: 'Total Operating Expenses', G: '1,151,974', H: '1,132,828', Q: '1,734,069', R: '1,333,829' },
  39: { F: 'Earnings Before Income Taxes', G: '15,294,600', H: '16,382,638', Q: '12,036,333', R: '16,101,851' },
  40: {
    F: 'Total Provision for Income Taxes', flags: true, line: 'under',
    G: '6,117,840', H: '6,553,055', I: '6,098,089', J: '5,462,513', K: '6,315,100', L: '7,417,890',
    M: '7,350,591', N: '6,926,633', O: '7,083,016', P: '7,157,588', Q: '4,814,533', R: '6,440,740'
  },
  42: {
    F: 'Net Income', flags: true, line: 'double',
    G: '9,176,760', H: '9,829,583', I: '9,147,134', J: '8,193,770', K: '9,472,649', L: '11,126,835',
    M: '11,025,886', N: '10,389,950', O: '10,624,524', P: '10,736,382', Q: '7,221,800', R: '9,661,111'
  }
};

function cell(n, c) {
  const row = rows[n] || {};
  const isValue = valueCols.includes(c);
  let text = row[c] || '';
  const cls = [];

  if (c === 'F' && text.startsWith(' ')) cls.push('indent');
  if (isValue) {
    cls.push('num');
    if (row.flags) cls.push('flag');
    if (row.line) cls.push(row.line);
  }
  if (c === 'C' && row.cflag) cls.push('flag');
  if ((c === 'D' || c === 'E') && row.C) text = '*';

  if (params[n] && c === 'F') { text = params[n][0]; cls.push('param'); }
  if (params[n] && c === 'G') { text = params[n][1]; cls.push('param'); }
  if (n === 11 && c === 'G') cls.push('flag');
  if (n === 12 && c === 'G') { cls.push('dark'); cls.splice(cls.indexOf('num'), 1); }
  if (n === 14 && (isValue || c === 'F')) cls.push('over');

  if (n === 15 || n === 16) {
    if (isValue || c === 'F') cls.push('band');
    if (isValue) cls.push('val');
    if (c === 'E') cls.push('edge');
    if (n === 16 && months[c]) { text = months[c]; cls.push('bold'); }
  }
  if (n === 17 && months[c]) { text = 'Month to Date'; cls.push('bold'); }
  if (n === 18) {
    if (months[c]) text = 'Actual';
    if (c === 'C') text = 'Account';
    if (c === 'D') text = 'Sub';
    if (c === 'E') text = 'Product';
    if (c === 'F') text = 'Description';
    if (isValue || c === 'F') cls.push('bold', 'under');
  }
  if (n === 12 && c === 'E') cls.push('sel');

  return `<td class="${cls.join(' ')}">${text.trim().replace('&', '&amp;')}</td>`;
}

let html = '<colgroup>' + colWidths.map(w => `<col style="width:${w}px">`).join('') + '</colgroup>';
html += '<thead><tr><th class="gutter"><button>1</button><button>2</button></th>';
html += '<th class="corner"><svg width="8" height="9" viewBox="0 0 8 9"><path d="M8 1v8H0z" fill="#b5b5b5"/></svg></th>';
html += cols.map(c => `<th class="${c === 'E' ? 'hot' : ''}">${c}</th>`).join('') + '</tr></thead><tbody>';
for (let n = 11; n <= 48; n++) {
  html += `<tr class="row${n}" style="height:${heights[n] || 15}px">`;
  html += `<th class="gutter">${n === 11 ? '<button>+</button>' : ''}</th><th class="${n === 12 ? 'hot' : ''}">${n}</th>`;
  html += cols.map(c => cell(n, c)).join('') + '</tr>';
}
document.getElementById('grid').innerHTML = html + '</tbody>';

const lists = [
  ['ACC_Assets', 'Assets', 'Accpac'],
  ['ACC_Liabs', 'Liabilities', 'Accpac'],
  ['ACC_Net', 'Net assets', 'Accpac'],
  ['Accounts Receivable', 'Accounts Receivable', ''],
  ['Accrued Liabilities & Acc', 'Accrued Liabilities & Accounts Payable', ''],
  ['Advertisting & Promotions', 'Advertising & Promotions', ''],
  ['AllOtherExp', 'All Other Expenses', 'uses group for logic'],
  ['BilledAccts', 'Billed Accounts', ''],
  ['BusArea', 'Business Area Group', 'SAP'],
  ['Cash', 'Cash', 'MAS200'],
  ['Cash_OS', 'Cash Outstanding', '']
];

document.getElementById('lists').innerHTML = lists.map((l, i) => {
  const mark = i === 0 ? '<svg width="5" height="8" viewBox="0 0 5 8"><path d="M0 0v8l5-4z" fill="#000"/></svg>' : '';
  const lock = '<svg width="12" height="12"><use href="#i-unlock"/></svg>';
  return `<tr><td>${mark}</td><td>${lock}</td>` + l.map(t => `<td>${t.replace('&', '&amp;')}</td>`).join('') + '</tr>';
}).join('');
```
